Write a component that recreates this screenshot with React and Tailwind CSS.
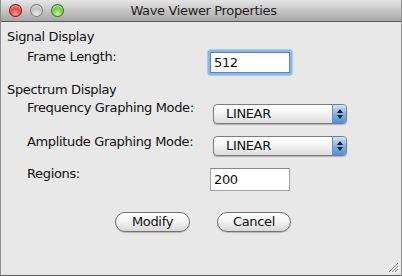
import React from 'react';

const font = { fontFamily: '"Lucida Grande", "DejaVu Sans", sans-serif' };

const TrafficLight = ({ from, to, edge }) => (
  <div
    className="w-[13px] h-[13px] rounded-full"
    style={{
      background: `radial-gradient(circle at 50% 75%, ${from} 0%, ${to} 70%)`,
      boxShadow: `inset 0 0 0 1px ${edge}, inset 0 3px 2px rgba(255,255,255,0.55)`,
    }}
  />
);

const Popup = ({ value }) => (
  <div className="flex w-[134px] h-[20px] rounded-[4px] border border-[#7d7d7d] bg-gradient-to-b from-[#ffffff] via-[#f2f2f2] to-[#dcdcdc] shadow-[0_1px_1px_rgba(0,0,0,0.25)] overflow-hidden">
    <div className="flex-1 pl-[12px] text-[13px] leading-[18px] text-[#111]">{value}</div>
    <div className="w-[14px] h-full flex flex-col items-center justify-center gap-[2px] border-l border-[#6f8fb8] bg-gradient-to-b from-[#cfe4f9] via-[#7fb3ea] to-[#4c8fd8]">
      <svg width="6" height="4" viewBox="0 0 6 4"><path d="M3 0 L6 4 L0 4 Z" fill="#1b1b1b" /></svg>
      <svg width="6" height="4" viewBox="0 0 6 4"><path d="M0 0 L6 0 L3 4 Z" fill="#1b1b1b" /></svg>
    </div>
  </div>
);

const Button = ({ children, w }) => (
  <div className={`${w} h-[20px] rounded-full border border-[#727272] bg-gradient-to-b from-[#ffffff] via-[#f1f1f1] to-[#d8d8d8] shadow-[0_1px_1px_rgba(0,0,0,0.2)] flex items-center justify-center text-[13px] text-[#111]`}>
    {children}
  </div>
);

export default function App() {
  return (
    <div style={font} className="w-[402px] h-[276px] flex flex-col border-x border-b border-x-[#8e8e8e] border-b-[#5c5c5c] bg-[#e8e8e8] relative tracking-[-0.35px]">
      {/* Title bar */}
      <div className="h-[22px] flex items-center relative bg-gradient-to-b from-[#e6e6e6] to-[#a6a6a6] border-b border-[#5a5a5a]">
        <div className="flex gap-[8px] pl-[8px]">
          <TrafficLight from="#ff9a9a" to="#d01818" edge="#8a1a1a" />
          <TrafficLight from="#eeeeee" to="#a8a8a8" edge="#7d7d7d" />
          <TrafficLight from="#c8f59a" to="#4cae1c" edge="#3d7a1c" />
        </div>
        <div className="flex-1 text-center text-[13px] text-[#1e1e1e] pr-[58px]">Wave Viewer Properties</div>
      </div>

      {/* Body */}
      <div className="flex-1 flex flex-col text-[13px] leading-[16px] text-[#111]">
        <div className="mt-[7px] pl-[6px] h-[16px]">Signal Display</div>

        <div className="mt-[4px] flex items-start h-[26px]">
          <div className="w-[207px] pl-[26px]">Frame Length:</div>
          <div className="mt-[1px] p-[2px] rounded-[3px] bg-[#8db5e3] shadow-[0_0_1px_1px_#a9c9ee]">
            <div className="w-[80px] h-[21px] bg-white border border-[#5f86b8] pl-[3px] leading-[19px]">512</div>
          </div>
        </div>

        <div className="mt-[7px] pl-[6px] h-[16px]">Spectrum Display</div>

        <div className="mt-[2px] flex items-start">
          <div className="w-[212px] pl-[26px]">Frequency Graphing Mode:</div>
          <div className="mt-[4px]"><Popup value="LINEAR" /></div>
        </div>

        <div className="mt-[10px] flex items-start">
          <div className="w-[212px] pl-[26px]">Amplitude Graphing Mode:</div>
          <div className="mt-[2px]"><Popup value="LINEAR" /></div>
        </div>

        <div className="mt-[10px] flex items-start">
          <div className="w-[209px] pl-[26px]">Regions:</div>
          <div className="mt-[2px] w-[80px] h-[23px] bg-white border border-[#a3a3a3] border-t-[#8a8a8a] pl-[3px] leading-[21px]">200</div>
        </div>

        <div className="mt-[21px] flex justify-center gap-[27px] pl-[4px]">
          <Button w="w-[75px]">Modify</Button>
          <Button w="w-[74px]">Cancel</Button>
        </div>
      </div>

      {/* Resize grip */}
      <svg className="absolute right-[2px] bottom-[2px]" width="11" height="11" viewBox="0 0 11 11">
        <path d="M10 1 L1 10 M10 4 L4 10 M10 7 L7 10" stroke="#7a7a7a" strokeWidth="1" />
        <path d="M11 2 L2 11 M11 5 L5 11 M11 8 L8 11" stroke="#ffffff" strokeWidth="1" opacity="0.8" />
      </svg>
    </div>
  );
}
